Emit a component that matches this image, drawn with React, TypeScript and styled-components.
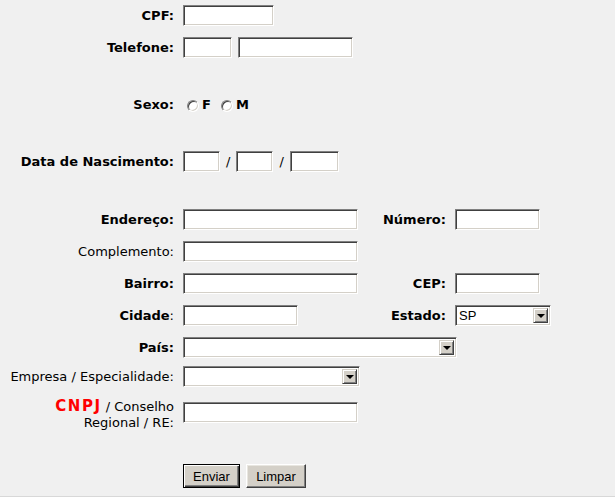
import styled, { createGlobalStyle } from 'styled-components';

const GlobalStyle = createGlobalStyle`
	html, body {
		margin: 0;
		padding: 0;
		background: #f0f0f0;
	}
`;

const App = () => {
	return (
		<>
			<GlobalStyle />
			<Form onSubmit={e => e.preventDefault()}>
				<Row>
					<Label $bold>CPF:</Label>
					<Field><TextInput $w={91} /></Field>
				</Row>

				<Row $top={11}>
					<Label $bold>Telefone:</Label>
					<Field>
						<TextInput $w={49} />
						<TextInput $w={115} />
					</Field>
				</Row>

				<Row $top={36}>
					<Label $bold>Sexo:</Label>
					<Field $gap={0}>
						<RadioOption>
							<Radio type="radio" name="sexo" />
							F
						</RadioOption>
						<RadioOption>
							<Radio type="radio" name="sexo" />
							M
						</RadioOption>
					</Field>
				</Row>

				<Row $top={36}>
					<Label $bold>Data de Nascimento:</Label>
					<Field $span={3}>
						<TextInput $w={37} />
						<Slash>/</Slash>
						<TextInput $w={37} />
						<Slash>/</Slash>
						<TextInput $w={49} />
					</Field>
				</Row>

				<Row $top={37}>
					<Label $bold>Endereço:</Label>
					<Field><TextInput $w={175} /></Field>
					<Label $bold>Número:</Label>
					<Field><TextInput $w={85} /></Field>
				</Row>

				<Row $top={11}>
					<Label>Complemento:</Label>
					<Field><TextInput $w={175} /></Field>
				</Row>

				<Row $top={11}>
					<Label $bold>Bairro:</Label>
					<Field><TextInput $w={175} /></Field>
					<Label $bold>CEP:</Label>
					<Field><TextInput $w={85} /></Field>
				</Row>

				<Row $top={11}>
					<Label $bold>Cidade<Thin>:</Thin></Label>
					<Field><TextInput $w={115} /></Field>
					<Label $bold>Estado:</Label>
					<Field>
						<SelectBox $w={96}>
							<Select defaultValue="SP">
								<option>SP</option>
							</Select>
							<ArrowButton><Triangle /></ArrowButton>
						</SelectBox>
					</Field>
				</Row>

				<Row $top={11}>
					<Label $bold>País:</Label>
					<Field $span={3}>
						<SelectBox $w={274}>
							<Select />
							<ArrowButton><Triangle /></ArrowButton>
						</SelectBox>
					</Field>
				</Row>

				<Row $top={8}>
					<Label>Empresa / Especialidade:</Label>
					<Field $span={3}>
						<SelectBox $w={177}>
							<Select />
							<ArrowButton><Triangle /></ArrowButton>
						</SelectBox>
					</Field>
				</Row>

				<Row $top={11} $align="start">
					<Label>
						<Red>CNPJ</Red> / Conselho<br />Regional / RE:
					</Label>
					<Field $offset={4}><TextInput $w={175} /></Field>
				</Row>

				<Row $top={33}>
					<span />
					<Field $span={3}>
						<Button type="submit" $default $w={57}>Enviar</Button>
						<Button type="reset" $w={60}>Limpar</Button>
					</Field>
				</Row>

				<Footer />
			</Form>
		</>
	);
}

const Form = styled.form`
	width: 100%;
	padding-top: 5px;

	display: flex;
	flex-direction: column;

	font-family: "DejaVu Sans", Verdana, sans-serif;
	color: #000;
`;

const Row = styled.div<{ $top?: number; $align?: string }>`
	display: grid;
	grid-template-columns: 174px 175px 79px auto;
	column-gap: 9px;
	align-items: ${p => p.$align || 'center'};

	margin-top: ${p => p.$top ?? 0}px;
`;

const Label = styled.label<{ $bold?: boolean }>`
	text-align: right;
	font-size: 13px;
	font-weight: ${p => (p.$bold ? 700 : 400)};
	line-height: 16px;
	white-space: nowrap;
`;

const Thin = styled.span`
	font-weight: 400;
`;

const Red = styled.span`
	color: #ff0000;
	font-weight: 700;
	font-size: 15px;
	letter-spacing: 1.5px;
`;

const Field = styled.div<{ $span?: number; $gap?: number; $offset?: number }>`
	display: flex;
	align-items: center;
	gap: ${p => p.$gap ?? 6}px;

	min-height: 21px;
	margin-top: ${p => p.$offset ?? 0}px;

	grid-column: span ${p => p.$span ?? 1};
`;

const TextInput = styled.input<{ $w: number }>`
	box-sizing: border-box;
	width: ${p => p.$w}px;
	height: 21px;
	margin: 0;
	padding: 1px 3px;

	background: #fff;
	border: 1px solid;
	border-color: #808080 #fff #fff #808080;
	box-shadow: inset 1px 1px 0 #404040, inset -1px -1px 0 #d4d0c8;

	font: 13px "Liberation Sans", Arial, sans-serif;
	outline: none;
`;

const Slash = styled.span`
	font-size: 13px;
`;

const RadioOption = styled.label`
	display: flex;
	align-items: center;
	gap: 3px;

	margin-left: 4px;
	margin-right: 6px;

	font-size: 13px;
	font-weight: 700;
`;

const Radio = styled.input`
	appearance: none;
	box-sizing: border-box;
	width: 12px;
	height: 12px;
	margin: 2px 0 0 0;

	border-radius: 50%;
	border: 1px solid;
	border-color: #808080 #fff #fff #808080;
	box-shadow: inset 1px 1px 0 #404040, inset -1px -1px 0 #d4d0c8;
	background: #fff;
`;

const SelectBox = styled.div<{ $w: number }>`
	box-sizing: border-box;
	width: ${p => p.$w}px;
	height: 21px;

	display: flex;
	align-items: stretch;

	padding: 2px;
	background: #fff;
	border: 1px solid;
	border-color: #808080 #fff #fff #808080;
	box-shadow: inset 1px 1px 0 #404040, inset -1px -1px 0 #d4d0c8;
`;

const Select = styled.select`
	appearance: none;
	flex: 1;
	min-width: 0;
	margin: 0;
	padding: 0 1px;

	border: none;
	background: transparent;
	outline: none;

	font: 13px "Liberation Sans", Arial, sans-serif;
	color: #000;
`;

const ArrowButton = styled.span`
	box-sizing: border-box;
	width: 15px;

	display: flex;
	align-items: center;
	justify-content: center;

	background: #d4d0c8;
	border: 1px solid;
	border-color: #d4d0c8 #404040 #404040 #d4d0c8;
	box-shadow: inset 1px 1px 0 #fff, inset -1px -1px 0 #808080;
`;

const Triangle = styled.span`
	width: 0;
	height: 0;
	border-left: 4px solid transparent;
	border-right: 4px solid transparent;
	border-top: 4px solid #000;
`;

const Button = styled.button<{ $default?: boolean; $w: number }>`
	box-sizing: border-box;
	width: ${p => p.$w}px;
	height: 24px;
	margin: 0;
	padding: 0;

	background: #d4d0c8;
	border: 1px solid;
	border-color: ${p => (p.$default ? '#000' : '#fff #404040 #404040 #fff')};
	box-shadow: ${p =>
		p.$default
			? 'inset 1px 1px 0 #fff, inset -1px -1px 0 #404040, inset -2px -2px 0 #808080'
			: 'inset -1px -1px 0 #808080, inset 1px 1px 0 #e8e6e0'};

	font: 13px "Liberation Sans", Arial, sans-serif;
	color: #000;
`;

const Footer = styled.div`
	margin-top: 8px;
	height: 2px;
	border-top: 1px solid #d8d8d8;
	background: #fff;
`;

export default App;
